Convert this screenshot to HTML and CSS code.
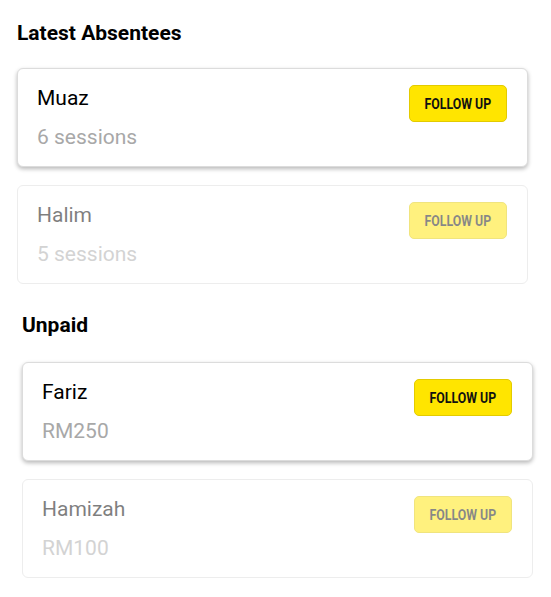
FILE: index.html
```html
<!DOCTYPE html>
<html>
<head>
<meta charset="utf-8">
<link rel="stylesheet" href="styles.css">
</head>
<body>
<main class="page">
  <section class="section section-a">
    <h2 class="title">Latest Absentees</h2>
    <div class="list">
      <div class="card active">
        <div class="info">
          <div class="name">Muaz</div>
          <div class="meta">6 sessions</div>
        </div>
        <button class="btn"><span class="btn-label">FOLLOW UP</span></button>
      </div>
      <div class="card faded">
        <div class="info">
          <div class="name">Halim</div>
          <div class="meta">5 sessions</div>
        </div>
        <button class="btn"><span class="btn-label">FOLLOW UP</span></button>
      </div>
    </div>
  </section>
  <section class="section section-b">
    <h2 class="title">Unpaid</h2>
    <div class="list">
      <div class="card active">
        <div class="info">
          <div class="name">Fariz</div>
          <div class="meta">RM250</div>
        </div>
        <button class="btn"><span class="btn-label">FOLLOW UP</span></button>
      </div>
      <div class="card faded">
        <div class="info">
          <div class="name">Hamizah</div>
          <div class="meta">RM100</div>
        </div>
        <button class="btn"><span class="btn-label">FOLLOW UP</span></button>
      </div>
    </div>
  </section>
</main>
</body>
</html>
```
FILE: styles.css
```css
* { box-sizing: border-box; }
html, body { margin: 0; padding: 0; background: #fff; }
body { font-family: Roboto, "Noto Sans", sans-serif; color: #000; }
.page { padding-top: 19px; }
.section-a { padding: 0 23px 0 17px; }
.section-b { padding: 0 18px 0 22px; margin-top: 27px; }
.title {
  margin: 0 0 21px 0;
  font-size: 21px;
  line-height: 28px;
  font-weight: 700;
}
.section-b .title { margin-bottom: 23px; }
.list { display: flex; flex-direction: column; gap: 18px; }
.card {
  display: flex;
  justify-content: space-between;
  align-items: flex-start;
  border: 1px solid #dcdcdc;
  border-radius: 6px;
  background: #fff;
  padding: 15px 20px 15px 19px;
}
.card.active { box-shadow: 0 2px 4px rgba(0,0,0,0.28); }
.card.faded { opacity: 0.5; box-shadow: none; }
.name { font-size: 21px; line-height: 28px; }
.meta { font-size: 21px; line-height: 28px; margin-top: 11px; color: #a8a8a8; }
.btn {
  margin-top: 1px;
  width: 98px;
  height: 37px;
  background: #ffe500;
  border: 1px solid #e3cb00;
  border-radius: 5px;
  font-family: Roboto, sans-serif;
  font-weight: 700;
  font-size: 14px;
  color: #111;
  padding: 0;
  cursor: pointer;
  display: flex;
  align-items: center;
  justify-content: center;
}
.btn-label { display: inline-block; transform: scaleX(0.88); white-space: nowrap; }
```
